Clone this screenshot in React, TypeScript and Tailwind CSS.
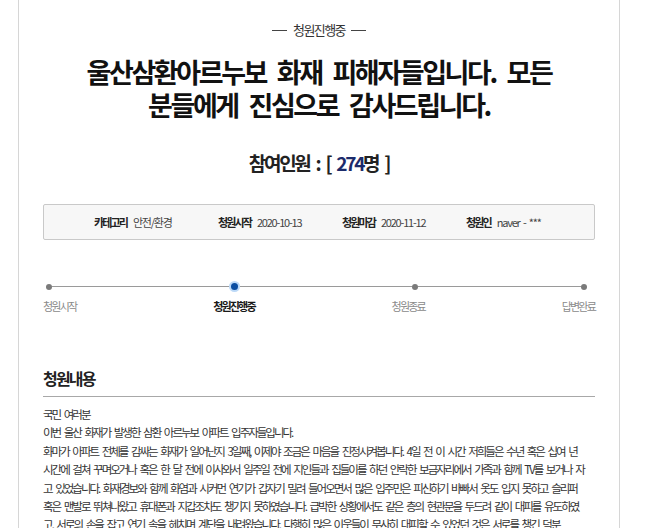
const font = { fontFamily: '"Noto Sans CJK KR", "Noto Sans", sans-serif' };

const infoItems = [
    { label: '카테고리', value: '안전/환경' },
    { label: '청원시작', value: '2020-10-13' },
    { label: '청원마감', value: '2020-11-12' },
    { label: '청원인', value: 'naver - ***' },
];

const steps = ['청원시작', '청원진행중', '청원종료', '답변완료'];

const bodyLines = [
    '국민 여러분',
    '이번 울산 화재가 발생한 삼환 아르누보 아파트 입주자들입니다.',
    '화마가 아파트 전체를 감싸는 화재가 일어난지 3일째, 이제야 조금은 마음을 진정시켜봅니다. 4일 전 이 시간 저희들은 수년 혹은 십여 년',
    '시간에 걸쳐 꾸며오거나 혹은 한 달 전에 이사와서 일주일 전에 지인들과 집들이를 하던 안락한 보금자리에서 가족과 함께 TV를 보거나 자',
    '고 있었습니다. 화재경보와 함께 화염과 시커먼 연기가 갑자기 밀려 들어오면서 많은 입주민은 피신하기 바빠서 옷도 입지 못하고 슬리퍼',
    '혹은 맨발로 뛰쳐나왔고 휴대폰과 지갑조차도 챙기지 못하였습니다. 급박한 상황에서도 같은 층의 현관문을 두드려 같이 대피를 유도하였',
    '고, 서로의 손을 잡고 연기 속을 헤치며 계단을 내려왔습니다. 다행히 많은 이웃들이 무사히 대피할 수 있었던 것은 서로를 챙긴 덕분',
];

const Dot = ({ active }: { active?: boolean }) =>
    active ? (
        <span className="flex h-[11px] w-[11px] shrink-0 items-center justify-center rounded-full bg-[#bcd9f7]">
            <span className="h-[7px] w-[7px] rounded-full bg-[#0b4ea2]" />
        </span>
    ) : (
        <span className="h-[6px] w-[6px] shrink-0 rounded-full bg-[#7a7a7a]" />
    );

const App = () => {
    return (
        <div className="h-[528px] w-[655px] overflow-hidden bg-white" style={font}>
            <div className="ml-[18px] min-h-[528px] w-[602px] border-x border-[#d6d6d6] px-[24px] pt-[22px]">
                {/* status tag */}
                <div className="flex items-center justify-center gap-[6px] text-[13px] leading-[16px] tracking-[-1.6px] text-[#333]">
                    <span className="h-px w-[15px] bg-[#444]" />
                    <span>청원진행중</span>
                    <span className="h-px w-[15px] bg-[#444]" />
                </div>

                <h1 className="mt-[17px] text-center text-[27px] font-bold leading-[33px] tracking-[-2.4px] text-[#111] [word-spacing:7px]">
                    울산삼환아르누보 화재 피해자들입니다. 모든
                    <br />
                    분들에게 진심으로 감사드립니다.
                </h1>

                <div className="mt-[30px] text-center text-[19px] font-bold leading-[24px] tracking-[-2.3px] text-[#222] [word-spacing:4px]">
                    참여인원 : [ <span className="text-[#1c2b6b]">274</span>명 ]
                </div>

                {/* info box */}
                <div className="mt-[29px] flex h-[36px] items-center rounded-[2px] border border-[#c9c9c9] bg-[#f7f7f7] pl-[50px] text-[11px] tracking-[-1.9px] [word-spacing:2px]">
                    {infoItems.map((item) => (
                        <div key={item.label} className="flex w-[124px] items-center gap-[6px]">
                            <span className="font-bold text-[#222]">{item.label}</span>
                            <span className="text-[#444] tracking-[-1.2px]">{item.value}</span>
                        </div>
                    ))}
                </div>

                {/* progress */}
                <div className="mt-[41px] flex h-[11px] items-center pl-[3px]">
                    <Dot />
                    <span className="h-px w-[177px] bg-[#9a9a9a]" />
                    <Dot active />
                    <span className="h-px w-[172px] bg-[#9a9a9a]" />
                    <Dot />
                    <span className="h-px w-[163px] bg-[#9a9a9a]" />
                    <Dot />
                </div>
                <div className="mt-[6px] flex justify-between text-[11px] leading-[16px] tracking-[-1.8px]">
                    {steps.map((s, i) => (
                        <span key={s} className={i === 1 ? 'font-bold text-[#1a1a1a]' : 'text-[#8a8a8a]'}>
                            {s}
                        </span>
                    ))}
                </div>

                {/* content */}
                <h2 className="mt-[53px] border-b border-[#a8a8a8] pb-[7px] text-[16px] font-bold leading-[22px] tracking-[-1.8px] text-[#222]">
                    청원내용
                </h2>
                <div className="mt-[8px] text-[11.5px] leading-[18.4px] tracking-[-2px] text-[#333] [word-spacing:3px]">
                    {bodyLines.map((line, i) => (
                        <p key={i} className="whitespace-nowrap">
                            {line}
                        </p>
                    ))}
                </div>
            </div>
        </div>
    );
};

export default App;
